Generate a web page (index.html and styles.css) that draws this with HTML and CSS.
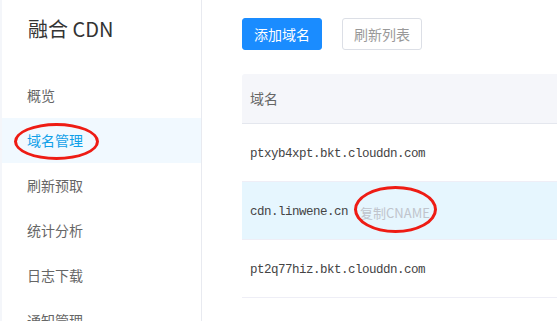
FILE: index.html
```html
<!DOCTYPE html>
<html lang="zh-CN">
<head>
<meta charset="utf-8">
<title>融合 CDN</title>
<link rel="stylesheet" href="styles.css">
</head>
<body>
<div class="app">
  <aside class="sidebar">
    <div class="brand">融合 CDN</div>
    <nav class="menu">
      <a class="menu-item">概览</a>
      <a class="menu-item active">域名管理<span class="mark mark-menu"></span></a>
      <a class="menu-item">刷新预取</a>
      <a class="menu-item">统计分析</a>
      <a class="menu-item">日志下载</a>
      <a class="menu-item">通知管理</a>
    </nav>
  </aside>
  <main class="main">
    <div class="toolbar">
      <button class="btn btn-primary">添加域名</button>
      <button class="btn btn-default">刷新列表</button>
    </div>
    <div class="table">
      <div class="thead">域名</div>
      <div class="row"><span class="domain">ptxyb4xpt.bkt.clouddn.com</span></div>
      <div class="row hover"><span class="domain">cdn.linwene.cn</span><span class="copy">复制CNAME<span class="mark mark-copy"></span></span></div>
      <div class="row"><span class="domain">pt2q77hiz.bkt.clouddn.com</span></div>
    </div>
  </main>
</div>
</body>
</html>
```
FILE: styles.css
```css
html, body {
  margin: 0;
  padding: 0;
  height: 100%;
  overflow: hidden;
  background: #f4f6fa;
  font-family: "Noto Sans CJK SC", "Liberation Sans", sans-serif;
}
.app {
  display: flex;
  height: 100%;
  padding-left: 2px;
}
.sidebar {
  width: 199px;
  flex: none;
  background: #fff;
  border-right: 1px solid #e8eaf0;
}
.brand {
  height: 73px;
  box-sizing: border-box;
  padding: 15px 0 0 26px;
  font-size: 20px;
  line-height: 28px;
  color: #333;
}
.menu {
  display: flex;
  flex-direction: column;
}
.menu-item {
  position: relative;
  height: 45px;
  line-height: 45px;
  padding-left: 25px;
  font-size: 14px;
  color: #666;
}
.menu-item.active {
  background: #f1f9ff;
  color: #10a0e8;
}
.mark {
  position: absolute;
  border: 3px solid #ee1c14;
  border-radius: 50%;
  box-sizing: border-box;
}
.mark-menu {
  left: 12px;
  top: 5px;
  width: 85px;
  height: 37px;
}
.main {
  flex: 1;
  background: #fff;
  padding-left: 40px;
  min-width: 0;
}
.toolbar {
  display: flex;
  gap: 20px;
  padding-top: 18px;
  height: 32px;
}
.btn {
  height: 32px;
  width: 80px;
  box-sizing: border-box;
  border-radius: 3px;
  font-family: inherit;
  font-size: 14px;
  padding: 0;
  line-height: 30px;
}
.btn-primary {
  background: #1a8cff;
  border: 1px solid #1a8cff;
  color: #fff;
}
.btn-default {
  background: #fff;
  border: 1px solid #dcdfe6;
  color: #999;
}
.table {
  margin-top: 24px;
}
.thead {
  height: 49px;
  line-height: 49px;
  background: #f5f6fa;
  border-bottom: 1px solid #e4e7ee;
  border-top-left-radius: 3px;
  padding-left: 8px;
  font-size: 14px;
  color: #666;
}
.row {
  height: 58px;
  box-sizing: border-box;
  padding-top: 3px;
  border-bottom: 1px solid #eeeef6;
  display: flex;
  align-items: center;
  padding-left: 8px;
}
.row.hover {
  background: #e6f6fe;
}
.domain {
  font-family: "Liberation Mono", monospace;
  font-size: 12.5px;
  letter-spacing: -0.5px;
  color: #444;
}
.copy {
  position: relative;
  margin-left: 12px;
  font-size: 13px;
  color: #c0c4cc;
}
.mark-copy {
  left: -6px;
  top: -17px;
  width: 83px;
  height: 47px;
}
```
